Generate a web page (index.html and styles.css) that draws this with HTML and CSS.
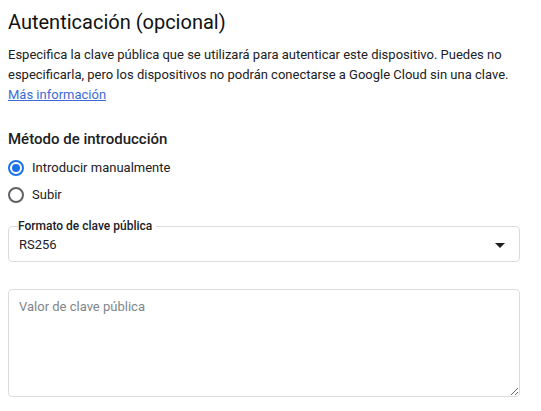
FILE: index.html
```html
<!DOCTYPE html>
<html lang="es">
<head>
<meta charset="utf-8">
<title>Autenticación</title>
<link rel="stylesheet" href="styles.css">
</head>
<body>
<main class="page">
  <h1 class="title">Autenticación (opcional)</h1>
  <p class="desc">Especifica la clave pública que se utilizará para autenticar este dispositivo. Puedes no especificarla, pero los dispositivos no podrán conectarse a Google Cloud sin una clave. <a class="link" href="#">Más información</a></p>

  <h2 class="subtitle">Método de introducción</h2>
  <div class="radios">
    <label class="radio">
      <span class="radio-circle checked"><span class="radio-dot"></span></span>
      <span class="radio-label">Introducir manualmente</span>
    </label>
    <label class="radio">
      <span class="radio-circle"></span>
      <span class="radio-label">Subir</span>
    </label>
  </div>

  <fieldset class="select">
    <legend class="select-legend">Formato de clave pública</legend>
    <div class="select-row">
      <span class="select-value">RS256</span>
      <svg class="select-arrow" width="10" height="5" viewBox="0 0 10 5"><path d="M0 0h10L5 5z" fill="#202124"/></svg>
    </div>
  </fieldset>

  <textarea class="textarea" placeholder="Valor de clave pública"></textarea>
</main>
</body>
</html>
```
FILE: styles.css
```css
html, body {
  margin: 0;
  padding: 0;
  background: #fff;
}
body {
  font-family: Roboto, "Liberation Sans", Arial, sans-serif;
  color: #202124;
}
.page {
  width: 512px;
  padding: 8px 0 0 8px;
  display: flex;
  flex-direction: column;
}
.title {
  margin: 0;
  font-size: 20px;
  line-height: 28px;
  font-weight: 400;
  color: #111;
}
.desc {
  margin: 9px 0 0;
  font-size: 13px;
  line-height: 20px;
  color: #202124;
}
.link {
  color: #3b6ad8;
  text-decoration: underline;
}
.subtitle {
  margin: 22px 0 0;
  font-size: 15px;
  line-height: 24px;
  font-weight: 500;
}
.radios {
  margin-top: 3px;
  display: flex;
  flex-direction: column;
}
.radio {
  display: flex;
  align-items: center;
  height: 27px;
  gap: 8px;
}
.radio-circle {
  box-sizing: border-box;
  width: 16px;
  height: 16px;
  border: 2px solid #5f6368;
  border-radius: 50%;
  display: flex;
  align-items: center;
  justify-content: center;
}
.radio-circle.checked {
  border-color: #1a73e8;
}
.radio-dot {
  width: 8px;
  height: 8px;
  border-radius: 50%;
  background: #1a73e8;
}
.radio-label {
  font-size: 13px;
  line-height: 20px;
}
.select {
  margin: 11px 0 0;
  padding: 2px 14px 6px 10px;
  border: 1px solid #dadce0;
  border-radius: 4px;
  min-width: 0;
}
.select-legend {
  padding: 0 4px 0 0;
  margin-left: -1px;
  font-size: 12px;
  line-height: 14px;
  font-weight: 500;
}
.select-row {
  display: flex;
  align-items: center;
  justify-content: space-between;
  height: 20px;
}
.select-value {
  font-size: 13px;
  line-height: 20px;
}
.select-arrow {
  display: block;
}
.textarea {
  margin: 27px 0 0;
  box-sizing: border-box;
  width: 512px;
  height: 108px;
  border: 1px solid #dadce0;
  border-radius: 4px;
  padding: 7px 10px;
  font-family: Roboto, "Liberation Sans", Arial, sans-serif;
  font-size: 13px;
  line-height: 20px;
  color: #202124;
  resize: vertical;
  outline: none;
}
.textarea::placeholder {
  color: #80868b;
}
```
